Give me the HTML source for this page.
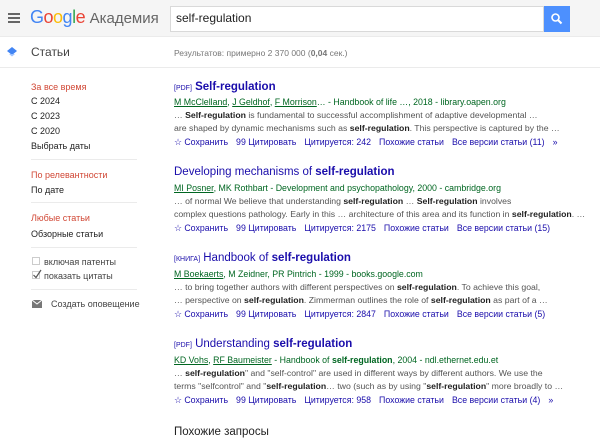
<!DOCTYPE html>
<html><head><meta charset="utf-8">
<style>
*{margin:0;padding:0;box-sizing:border-box}
body{width:600px;height:440px;overflow:hidden;background:#fff;font-family:"Liberation Sans",Arial,sans-serif;position:relative;color:#222}
.a{position:absolute;white-space:nowrap}
#hdr{position:absolute;left:0;top:0;width:600px;height:37px;background:#f5f5f5;border-bottom:1px solid #ebebeb}
#sub{position:absolute;left:0;top:37px;width:600px;height:31px;border-bottom:1px solid #ebebeb}
.side{font-size:9px;color:#222;left:31px}
.red{color:#d14836}
.sep{position:absolute;left:31px;width:106px;height:1px;background:#ebebeb}
.t{font-size:11.5px;color:#1a0dab;left:174px}
.t b{font-weight:bold}
.tag{font-size:7px;color:#1a0dab}
.au{font-size:8.8px;color:#006621;left:174px}
.au u{color:#006621}
.sn{font-size:8.7px;color:#545454;left:174px;line-height:13px}
.sn b{color:#222}
.lk{font-size:8.8px;color:#1a0dab;left:174px}
.lk span{margin-right:8px}
</style></head><body>
<div id="hdr"></div>
<div id="sub"></div>
<div class="a" style="left:8px;top:13px;width:12px;height:2px;background:#666;box-shadow:0 4px 0 #666,0 8px 0 #666"></div>
<div class="a" style="left:30px;top:7px;font-size:18px;letter-spacing:-0.5px"><span style="color:#4285f4">G</span><span style="color:#ea4335">o</span><span style="color:#fbbc05">o</span><span style="color:#4285f4">g</span><span style="color:#34a853">l</span><span style="color:#ea4335">e</span> <span style="color:#666;font-size:15px;letter-spacing:0">Академия</span></div>
<div class="a" style="left:170px;top:6px;width:374px;height:26px;background:#fff;border:1px solid #d9d9d9"></div>
<div class="a" style="left:176px;top:11px;font-size:12px;color:#222">self-regulation</div>
<div class="a" style="left:544px;top:6px;width:26px;height:26px;background:#4d90fe"></div>
<svg class="a" style="left:550px;top:12px" width="14" height="14"><circle cx="5.5" cy="5.5" r="3.5" stroke="#fff" stroke-width="1.6" fill="none"/><path d="M8 8 L11.5 11.5" stroke="#fff" stroke-width="2"/></svg>
<svg class="a" style="left:6px;top:46px" width="12" height="12"><path d="M6 1 L11 5 L6 9 L1 5Z" fill="#4285f4"/><path d="M3 8 L6 10.5 L9 8" fill="#a0c3ff"/></svg>
<div class="a" style="left:31px;top:45px;font-size:12px;color:#444">Статьи</div>
<div class="a" style="left:174px;top:48px;font-size:8.5px;color:#777">Результатов: примерно 2 370 000 (<b>0,04</b> сек.)</div>

<div class="a side red" style="top:82px">За все время</div>
<div class="a side" style="top:96px">С 2024</div>
<div class="a side" style="top:111px">С 2023</div>
<div class="a side" style="top:126px">С 2020</div>
<div class="a side" style="top:141px">Выбрать даты</div>
<div class="sep" style="top:159px"></div>
<div class="a side red" style="top:170px">По релевантности</div>
<div class="a side" style="top:185px">По дате</div>
<div class="sep" style="top:202px"></div>
<div class="a side red" style="top:213px">Любые статьи</div>
<div class="a side" style="top:229px">Обзорные статьи</div>
<div class="sep" style="top:247px"></div>
<div class="a" style="left:32px;top:257px;width:8px;height:8px;border:1px solid #ccc"></div>
<div class="a side" style="left:44px;top:257px;color:#444">включая патенты</div>
<div class="a" style="left:32px;top:271px;width:8px;height:8px;border:1px solid #ccc"></div>
<svg class="a" style="left:32px;top:269px" width="10" height="10"><path d="M1.5 6 L4 8.5 L9 1" stroke="#555" stroke-width="1.2" fill="none"/></svg>
<div class="a side" style="left:44px;top:271px;color:#444">показать цитаты</div>
<div class="sep" style="top:289px"></div>
<svg class="a" style="left:32px;top:300px" width="10" height="8"><rect width="10" height="8" fill="#777"/><path d="M0 0 L5 4 L10 0" stroke="#fff" stroke-width="1" fill="none"/></svg>
<div class="a side" style="left:51px;top:299px;color:#444">Создать оповещение</div>

<!-- r1 -->
<div class="a t" style="top:81px"><span class="tag">[PDF]</span> <b>Self-regulation</b></div>
<div class="a au" style="top:97px"><u>M McClelland</u>, <u>J Geldhof</u>, <u>F Morrison</u>… - Handbook of life …, 2018 - library.oapen.org</div>
<div class="a sn" style="top:109px">… <b>Self-regulation</b> is fundamental to successful accomplishment of adaptive developmental …<br>are shaped by dynamic mechanisms such as <b>self-regulation</b>. This perspective is captured by the …</div>
<div class="a lk" style="top:137px"><span>☆ Сохранить</span><span>99 Цитировать</span><span>Цитируется: 242</span><span>Похожие статьи</span><span>Все версии статьи (11)</span><span>»</span></div>
<!-- r2 -->
<div class="a t" style="top:166px">Developing mechanisms of <b>self-regulation</b></div>
<div class="a au" style="top:183px"><u>MI Posner</u>, MK Rothbart - Development and psychopathology, 2000 - cambridge.org</div>
<div class="a sn" style="top:195px">… of normal We believe that understanding <b>self-regulation</b> … <b>Self-regulation</b> involves<br>complex questions pathology. Early in this … architecture of this area and its function in <b>self-regulation</b>. …</div>
<div class="a lk" style="top:223px"><span>☆ Сохранить</span><span>99 Цитировать</span><span>Цитируется: 2175</span><span>Похожие статьи</span><span>Все версии статьи (15)</span></div>
<!-- r3 -->
<div class="a t" style="top:252px"><span class="tag">[КНИГА]</span> Handbook of <b>self-regulation</b></div>
<div class="a au" style="top:269px"><u>M Boekaerts</u>, M Zeidner, PR Pintrich - 1999 - books.google.com</div>
<div class="a sn" style="top:281px">… to bring together authors with different perspectives on <b>self-regulation</b>. To achieve this goal,<br>… perspective on <b>self-regulation</b>. Zimmerman outlines the role of <b>self-regulation</b> as part of a …</div>
<div class="a lk" style="top:309px"><span>☆ Сохранить</span><span>99 Цитировать</span><span>Цитируется: 2847</span><span>Похожие статьи</span><span>Все версии статьи (5)</span></div>
<!-- r4 -->
<div class="a t" style="top:338px"><span class="tag">[PDF]</span> Understanding <b>self-regulation</b></div>
<div class="a au" style="top:355px"><u>KD Vohs</u>, <u>RF Baumeister</u> - Handbook of <b>self-regulation</b>, 2004 - ndl.ethernet.edu.et</div>
<div class="a sn" style="top:367px">… <b>self-regulation</b>" and "self-control" are used in different ways by different authors. We use the<br>terms "selfcontrol" and "<b>self-regulation</b>… two (such as by using "<b>self-regulation</b>" more broadly to …</div>
<div class="a lk" style="top:395px"><span>☆ Сохранить</span><span>99 Цитировать</span><span>Цитируется: 958</span><span>Похожие статьи</span><span>Все версии статьи (4)</span><span>»</span></div>
<div class="a" style="left:174px;top:426px;font-size:11.5px;color:#222">Похожие запросы</div>
</body></html>
